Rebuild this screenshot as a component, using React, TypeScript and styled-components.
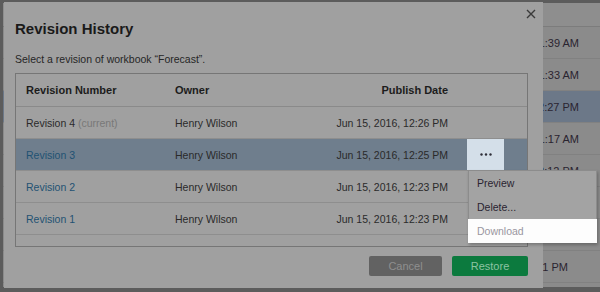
import styled, { createGlobalStyle } from "styled-components";

const GlobalStyle = createGlobalStyle`
  html, body {
    margin: 0;
    padding: 0;
  }
  body {
    font-family: "Liberation Sans", Arial, sans-serif;
  }
`;

const Root = styled.div`
  position: relative;
  width: 600px;
  height: 292px;
  overflow: hidden;
  background-color: #5c5c5c;
  padding: 3px 0 5px 3px;
  box-sizing: border-box;
`;

// the dimmed page that sits behind the dialog
const Page = styled.div`
  height: 100%;
  background-color: #8b8b8b;
  display: flex;
  flex-direction: column;
`;

const PageHeader = styled.div`
  height: 23px;
  flex: none;
  border-bottom: 1px solid #7c7c7c;
  background-color: #8e8e8e;
`;

const PageRow = styled.div<{ $selected?: boolean; $inset?: number }>`
  height: 31px;
  flex: none;
  border-bottom: 1px solid #818181;
  background-color: ${(p) => (p.$selected ? "#6c7888" : "transparent")};
  display: flex;
  align-items: center;
  justify-content: flex-end;
  padding-right: ${(p) => p.$inset ?? 21}px;
  font-size: 11px;
  color: #2a2430;
`;

const Dialog = styled.div`
  position: absolute;
  left: 4px;
  top: 2px;
  width: 539px;
  height: 286px;
  box-sizing: border-box;
  background-color: #a0a0a0;
  padding: 0 15px 0 11px;
  display: flex;
  flex-direction: column;
`;

const Header = styled.div`
  display: flex;
  align-items: flex-start;
  justify-content: space-between;
  padding-top: 7px;
`;

const Title = styled.h2`
  margin: 11px 0 0;
  font-size: 15px;
  line-height: 18px;
  font-weight: bold;
  color: #1a1a1a;
`;

const CloseButton = styled.button`
  margin-right: -8px;
  width: 10px;
  height: 10px;
  padding: 0;
  border: 0;
  background: none;
  display: flex;
  color: #3a3a3a;
`;

const Subtitle = styled.p`
  margin: 15px 0 7px;
  font-size: 10.5px;
  line-height: 13px;
  color: #262626;
`;

const Table = styled.div`
  border: 1px solid #767676;
  display: flex;
  flex-direction: column;
  height: 172px;
`;

const Row = styled.div<{ $selected?: boolean; $head?: boolean }>`
  display: grid;
  grid-template-columns: 148px 136px 158px 1fr;
  align-items: center;
  height: ${(p) => (p.$head ? 32 : 31)}px;
  flex: none;
  border-bottom: 1px solid ${(p) => (p.$head ? "#8a8a8a" : "#8e8e8e")};
  background-color: ${(p) => (p.$selected ? "#6f7e8d" : "transparent")};
  font-size: ${(p) => (p.$head ? 11 : 10.5)}px;
  font-weight: ${(p) => (p.$head ? "bold" : "normal")};
  color: ${(p) => (p.$head ? "#1c1c1c" : "#2a2a2a")};
`;

const Cell = styled.div<{ $right?: boolean }>`
  padding: ${(p) => (p.$right ? "0 10px 0 0" : "0 0 0 10px")};
  text-align: ${(p) => (p.$right ? "right" : "left")};
  white-space: nowrap;
`;

const OwnerCell = styled(Cell)`
  padding-left: 11px;
`;

const RevisionLink = styled.span<{ $current?: boolean }>`
  color: ${(p) => (p.$current ? "#2a2a2a" : "#1f5273")};
`;

const Muted = styled.span`
  color: #787878;
`;

const ActionCell = styled.div`
  position: relative;
  height: 100%;
  padding-left: 9px;
`;

const DotsButton = styled.button`
  width: 37px;
  height: 100%;
  border: 0;
  padding: 0;
  background-color: #d4dfe9;
  display: flex;
  align-items: center;
  justify-content: center;
`;

const Menu = styled.ul`
  position: absolute;
  top: 100%;
  left: 10px;
  width: 129px;
  margin: 0;
  padding: 0;
  list-style: none;
  background-color: #a3a3a3;
  border: 1px solid #8c8c8c;
  box-sizing: border-box;
  box-shadow: 1px 2px 3px rgba(0, 0, 0, 0.25);
  z-index: 2;
`;

const MenuItem = styled.li<{ $spot?: boolean }>`
  height: 24px;
  display: flex;
  align-items: center;
  font-size: 10.5px;
  color: ${(p) => (p.$spot ? "#9a96a0" : "#2a2331")};
  background-color: ${(p) => (p.$spot ? "#fdfdfd" : "transparent")};
  margin: ${(p) => (p.$spot ? "0 -1px -1px" : "0")};
  padding-left: ${(p) => (p.$spot ? 9 : 8)}px;
`;

const Filler = styled.div`
  flex: 1;
`;

const Footer = styled.div`
  display: flex;
  justify-content: flex-end;
  gap: 10px;
  margin-top: 9px;
`;

const Button = styled.button<{ $primary?: boolean }>`
  width: ${(p) => (p.$primary ? 76 : 73)}px;
  height: 20px;
  border: 0;
  border-radius: 2px;
  font-family: inherit;
  font-size: 11px;
  background-color: ${(p) => (p.$primary ? "#0c7a3e" : "#626262")};
  color: ${(p) => (p.$primary ? "#8cc3a2" : "#8f8f8f")};
`;

const revisions = [
  { name: "Revision 4", current: true, date: "Jun 15, 2016, 12:26 PM" },
  { name: "Revision 3", selected: true, date: "Jun 15, 2016, 12:25 PM" },
  { name: "Revision 2", date: "Jun 15, 2016, 12:23 PM" },
  { name: "Revision 1", date: "Jun 15, 2016, 12:23 PM" },
];

const pageTimes = [
  "11:39 AM",
  "11:33 AM",
  "12:27 PM",
  "11:17 AM",
  "12:12 PM",
  "12:05 PM",
  "11:58 AM",
  "12:01 PM",
];

const Dots = () => (
  <svg width="12" height="3" viewBox="0 0 12 3">
    <circle cx="1.5" cy="1.5" r="1.2" fill="#2e2e38" />
    <circle cx="6" cy="1.5" r="1.2" fill="#2e2e38" />
    <circle cx="10.5" cy="1.5" r="1.2" fill="#2e2e38" />
  </svg>
);

export default function App() {
  return (
    <>
      <GlobalStyle />
      <Root>
        <Page>
          <PageHeader />
          {pageTimes.map((t, i) => (
            <PageRow key={i} $selected={i === 2} $inset={i === 7 ? 32 : 21}>
              {t}
            </PageRow>
          ))}
        </Page>

        <Dialog>
          <Header>
            <Title>Revision History</Title>
            <CloseButton aria-label="Close">
              <svg width="10" height="10" viewBox="0 0 10 10">
                <path
                  d="M1 1 L9 9 M9 1 L1 9"
                  stroke="currentColor"
                  strokeWidth="1.4"
                  fill="none"
                />
              </svg>
            </CloseButton>
          </Header>
          <Subtitle>Select a revision of workbook “Forecast”.</Subtitle>

          <Table>
            <Row $head>
              <Cell>Revision Number</Cell>
              <OwnerCell>Owner</OwnerCell>
              <Cell $right>Publish Date</Cell>
              <div />
            </Row>
            {revisions.map((r) => (
              <Row key={r.name} $selected={r.selected}>
                <Cell>
                  <RevisionLink $current={r.current}>{r.name}</RevisionLink>
                  {r.current && <Muted> (current)</Muted>}
                </Cell>
                <OwnerCell>Henry Wilson</OwnerCell>
                <Cell $right>{r.date}</Cell>
                <ActionCell>
                  {r.selected && (
                    <>
                      <DotsButton aria-label="More actions">
                        <Dots />
                      </DotsButton>
                      <Menu>
                        <MenuItem>Preview</MenuItem>
                        <MenuItem>Delete...</MenuItem>
                        <MenuItem $spot>Download</MenuItem>
                      </Menu>
                    </>
                  )}
                </ActionCell>
              </Row>
            ))}
            <Filler />
          </Table>

          <Footer>
            <Button>Cancel</Button>
            <Button $primary>Restore</Button>
          </Footer>
        </Dialog>
      </Root>
    </>
  );
}
